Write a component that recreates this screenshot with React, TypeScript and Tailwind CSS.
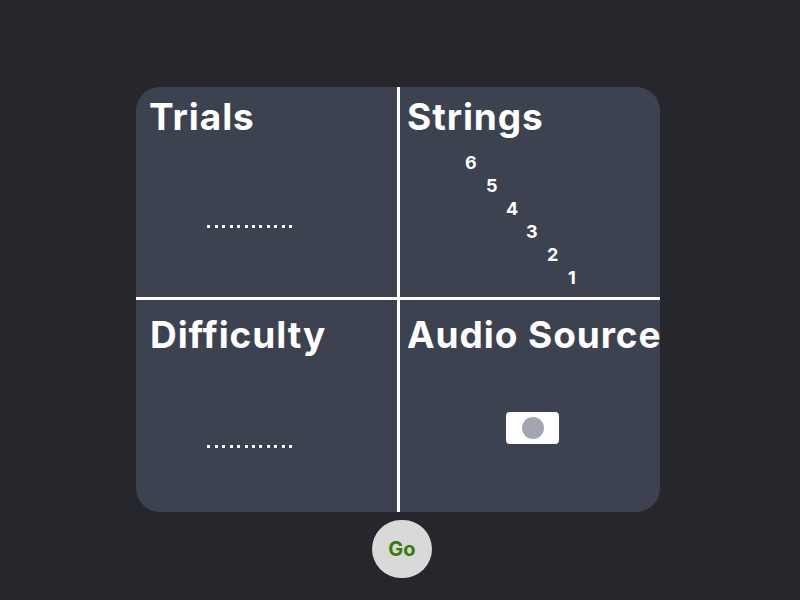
import React from "react";

const stringRows = [
  { n: 6, pad: "pl-[65px]" },
  { n: 5, pad: "pl-[86px]" },
  { n: 4, pad: "pl-[106px]" },
  { n: 3, pad: "pl-[126px]" },
  { n: 2, pad: "pl-[147px]" },
  { n: 1, pad: "pl-[168px]" },
];

function DottedSlider() {
  return (
    <div className="h-[3px] w-[90px] bg-[repeating-linear-gradient(90deg,#ffffff_0px,#ffffff_3px,transparent_3px,transparent_7.5px)]" />
  );
}

export default function App() {
  return (
    <div className="flex min-h-[600px] w-full flex-col items-center bg-[#25272c] pt-[87px] font-['Inter','Liberation_Sans',sans-serif] text-white [font-variant-ligatures:none]">
      <div className="ml-[-4px] grid w-[524px] grid-cols-[264px_260px] grid-rows-[213px_212px] overflow-hidden rounded-[24px] bg-[#3d4250]">
        <section className="flex flex-col border-b-[3px] border-r-[3px] border-white">
          <h2 className="pl-[13px] pt-[8px] text-[37px] font-bold leading-[44px] tracking-[0.025em]">
            Trials
          </h2>
          <div className="pl-[71px] pt-[86px]">
            <DottedSlider />
          </div>
        </section>

        <section className="flex flex-col border-b-[3px] border-white">
          <h2 className="pl-[7px] pt-[8px] text-[37px] font-bold leading-[44px] tracking-[0.025em]">
            Strings
          </h2>
          <ul className="pt-[12px] text-[18px] font-bold leading-[23px]">
            {stringRows.map((s) => (
              <li key={s.n} className={s.pad}>
                {s.n}
              </li>
            ))}
          </ul>
        </section>

        <section className="flex flex-col border-r-[3px] border-white">
          <h2 className="pl-[14px] pt-[13px] text-[37px] font-bold leading-[44px] tracking-[0.025em]">
            Difficulty
          </h2>
          <div className="pl-[71px] pt-[88px]">
            <DottedSlider />
          </div>
        </section>

        <section className="flex flex-col">
          <h2 className="whitespace-nowrap pl-[7px] pt-[13px] text-[37px] font-bold leading-[44px] tracking-[0.025em]">
            Audio Source
          </h2>
          <div className="pl-[106px] pt-[55px]">
            <button className="flex h-[32px] w-[53px] items-center justify-center rounded-[4px] bg-white">
              <span className="h-[22px] w-[22px] rounded-full bg-[#a3a6b0]" />
            </button>
          </div>
        </section>
      </div>

      <button className="ml-[4px] mt-[8px] flex h-[58px] w-[60px] items-center justify-center rounded-full bg-[#d9d9d9] text-[20px] font-bold text-[#3b7a08]">
        Go
      </button>
    </div>
  );
}
